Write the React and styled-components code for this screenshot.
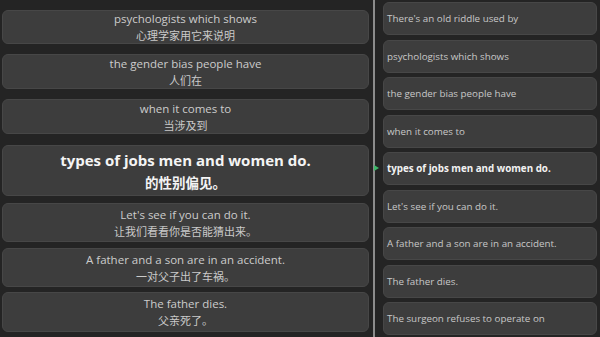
import React from "react";
import styled, { createGlobalStyle } from "styled-components";

const Global = createGlobalStyle`
  html, body { margin: 0; padding: 0; background: #242424; }
  body { font-family: "Open Sans", "Noto Sans CJK SC", sans-serif; }
`;

const Screen = styled.div`
  width: 600px;
  height: 337px;
  display: flex;
  background: #242424;
  overflow: hidden;
`;

const LeftPanel = styled.div`
  width: 367px;
  padding: 0 2px 0 2px;
  display: flex;
  flex-direction: column;
`;

const SubCard = styled.div`
  margin-top: ${(p) => p.$mt}px;
  height: ${(p) => p.$h}px;
  box-sizing: border-box;
  background: #3d3d3d;
  border: 1px solid #474747;
  border-radius: 6px;
  display: flex;
  flex-direction: column;
  align-items: center;
  justify-content: center;
  gap: ${(p) => (p.$active ? 2 : 0)}px;
`;

const EnLine = styled.div`
  font-size: ${(p) => (p.$active ? 15 : 11.5)}px;
  font-weight: ${(p) => (p.$active ? 700 : 400)};
  color: ${(p) => (p.$active ? "#f4f4f4" : "#cccccc")};
  line-height: ${(p) => (p.$active ? 20 : 16)}px;
  white-space: nowrap;
`;

const ZhLine = styled.div`
  font-family: "Noto Sans CJK SC", sans-serif;
  font-size: ${(p) => (p.$active ? 13.5 : 11)}px;
  font-weight: ${(p) => (p.$active ? 700 : 400)};
  color: ${(p) => (p.$active ? "#f4f4f4" : "#cacaca")};
  line-height: ${(p) => (p.$active ? 20 : 16)}px;
  white-space: nowrap;
`;

const Divider = styled.div`
  width: 2px;
  margin-left: 2px;
  background: #8c8c8c;
`;

const RightPanel = styled.div`
  flex: 1;
  padding: 2px 3px 0 8px;
  display: flex;
  flex-direction: column;
  gap: 4.5px;
`;

const Row = styled.div`
  position: relative;
  height: 33px;
  flex: none;
  box-sizing: border-box;
  background: #3d3d3d;
  border: 1px solid #474747;
  border-radius: 6px;
  display: flex;
  align-items: center;
  padding-left: 3px;
  font-size: 9.8px;
  font-weight: ${(p) => (p.$active ? 700 : 400)};
  color: ${(p) => (p.$active ? "#f2f2f2" : "#c8c8c8")};
  white-space: nowrap;
`;

const Marker = styled.div`
  position: absolute;
  left: -10px;
  top: 50%;
  margin-top: -3.5px;
  width: 0;
  height: 0;
  border-top: 3.5px solid transparent;
  border-bottom: 3.5px solid transparent;
  border-left: 5px solid #3fb86a;
`;

const subs = [
  { en: "psychologists which shows", zh: "心理学家用它来说明", mt: 10, h: 34 },
  { en: "the gender bias people have", zh: "人们在", mt: 10, h: 35 },
  { en: "when it comes to", zh: "当涉及到", mt: 10, h: 35 },
  { en: "types of jobs men and women do.", zh: "的性别偏见。", mt: 11, h: 51, active: true },
  { en: "Let's see if you can do it.", zh: "让我们看看你是否能猜出来。", mt: 7, h: 39 },
  { en: "A father and a son are in an accident.", zh: "一对父子出了车祸。", mt: 6, h: 39 },
  { en: "The father dies.", zh: "父亲死了。", mt: 5, h: 40 },
];

const lines = [
  "There's an old riddle used by",
  "psychologists which shows",
  "the gender bias people have",
  "when it comes to",
  "types of jobs men and women do.",
  "Let's see if you can do it.",
  "A father and a son are in an accident.",
  "The father dies.",
  "The surgeon refuses to operate on",
];

export default function App() {
  return (
    <>
      <Global />
      <Screen>
        <LeftPanel>
          {subs.map((s, i) => (
            <SubCard key={i} $mt={s.mt} $h={s.h} $active={s.active}>
              <EnLine $active={s.active}>{s.en}</EnLine>
              <ZhLine $active={s.active}>{s.zh}</ZhLine>
            </SubCard>
          ))}
        </LeftPanel>
        <Divider />
        <RightPanel>
          {lines.map((l, i) => (
            <Row key={i} $active={i === 4}>
              {i === 4 && <Marker />}
              {l}
            </Row>
          ))}
        </RightPanel>
      </Screen>
    </>
  );
}
